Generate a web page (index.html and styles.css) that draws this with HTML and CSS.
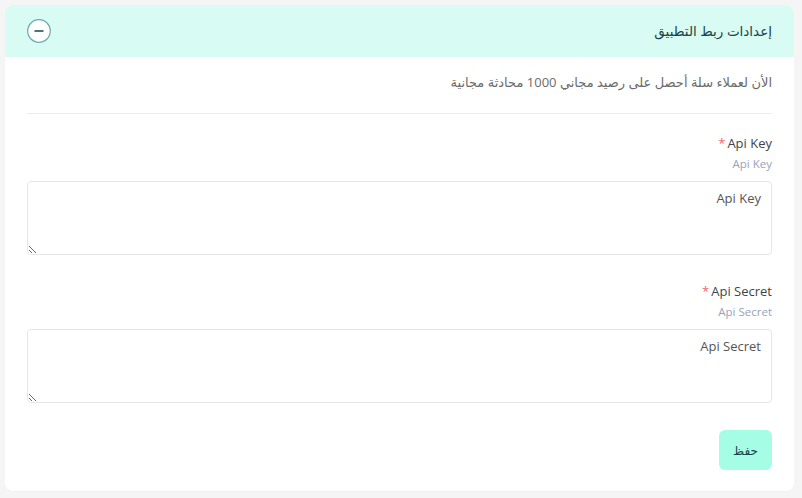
FILE: index.html
```html
<!DOCTYPE html>
<html lang="ar" dir="rtl">
<head>
  <meta charset="UTF-8">
  <meta name="viewport" content="width=device-width, initial-scale=1.0">
  <title>إعدادات ربط التطبيق</title>
  <link rel="stylesheet" href="styles.css">
</head>
<body>
  <div class="card">
    <!-- Collapsible header -->
    <div class="card-header">
      <h2 class="card-title">إعدادات ربط التطبيق</h2>
      <button class="toggle-btn" aria-label="طي">
        <svg width="24" height="24" viewBox="0 0 24 24">
          <circle cx="12" cy="12" r="11.3" fill="#fff" stroke="#6aa9b5" stroke-width="1.2"/>
          <line x1="7.5" y1="12" x2="16.5" y2="12" stroke="#17434a" stroke-width="1.6"/>
        </svg>
      </button>
    </div>

    <div class="card-body">
      <p class="notice">الأن لعملاء سلة أحصل على رصيد مجاني 1000 محادثة مجانية</p>
      <hr class="divider">

      <div class="field">
        <label class="field-label" for="apiKey">Api Key<span class="required">*</span></label>
        <div class="field-hint">Api Key</div>
        <textarea id="apiKey" class="field-input" placeholder="Api Key"></textarea>
      </div>

      <div class="field">
        <label class="field-label" for="apiSecret">Api Secret<span class="required">*</span></label>
        <div class="field-hint">Api Secret</div>
        <textarea id="apiSecret" class="field-input" placeholder="Api Secret"></textarea>
      </div>

      <div class="actions">
        <button class="save-btn">حفظ</button>
      </div>
    </div>
  </div>
</body>
</html>
```

FILE: styles.css
```css
body {
  font-family: "Open Sans", "DejaVu Sans", sans-serif;
  background: #f5f5f5;
  margin: 0;
  padding: 5px 8px 7px 5px;
  color: #444;
}
.card {
  background: #fff;
  border-radius: 8px;
  border-bottom: 1px solid #e3f8f1;
  overflow: hidden;
}
.card-header {
  display: flex;
  align-items: center;
  justify-content: space-between;
  height: 52px;
  padding: 0 22px;
  background: #d8fcf3;
}
.card-title {
  margin: 0;
  font-size: 13.5px;
  font-weight: normal;
  color: #17434a;
}
.toggle-btn {
  display: flex;
  padding: 0;
  margin: 0;
  border: none;
  background: none;
  cursor: pointer;
}
.card-body {
  padding: 14px 22px 21px 22px;
}
.notice {
  margin: 0;
  font-size: 13px;
  line-height: 22px;
  color: #6b6b6b;
}
.divider {
  border: none;
  border-top: 1px solid #ececec;
  margin: 20px 0 0 0;
}
.field {
  display: flex;
  flex-direction: column;
  margin-top: 19px;
}
.field + .field {
  margin-top: 26px;
}
.field-label {
  font-size: 13px;
  line-height: 20px;
  color: #444;
}
.required {
  color: #f06a6a;
  margin-right: 2px;
}
.field-hint {
  font-size: 11.5px;
  line-height: 14px;
  margin-top: 4px;
  color: #9aa3b8;
}
.field-input {
  margin-top: 10px;
  height: 74px;
  box-sizing: border-box;
  padding: 7px 10px;
  border: 1px solid #e6e6e6;
  border-radius: 4px;
  font-family: inherit;
  font-size: 13px;
  color: #444;
  resize: vertical;
}
.field-input::placeholder {
  color: #555;
}
.actions {
  display: flex;
  margin-top: 27px;
}
.save-btn {
  width: 53px;
  height: 40px;
  border: none;
  border-radius: 6px;
  background: #a6fde6;
  color: #17434a;
  font-family: inherit;
  font-size: 12px;
  cursor: pointer;
}
```
